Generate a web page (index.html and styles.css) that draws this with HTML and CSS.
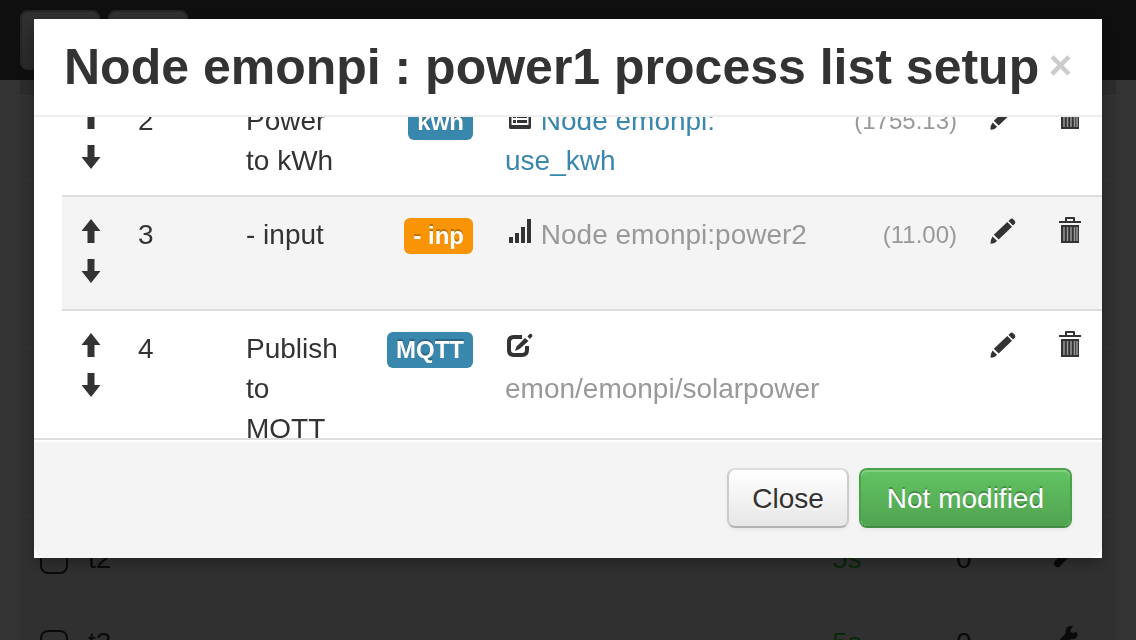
FILE: index.html
```html
<!DOCTYPE html>
<html lang="en">
<head>
<meta charset="utf-8">
<meta name="viewport" content="width=device-width, initial-scale=1">
<title>Process list setup</title>
<link rel="stylesheet" href="styles.css">
</head>
<body>
<svg class="sprite" aria-hidden="true">
  <symbol id="up" viewBox="0 0 28 28"><path d="M13 2l9.500 12h-6v12h-7V14h-6z"/></symbol>
  <symbol id="down" viewBox="0 0 28 28"><path d="M9.500 2h7v12h6L13 26 3.500 14h6z"/></symbol>
  <symbol id="pencil" viewBox="0 0 28 28"><path d="M19.500 4l2-2q1.500-1 3 .5l1 1q1.500 1.500.5 3l-2 2zM18.300 5l4.700 4.700L9.700 22.500 4.800 17.800zM3.500 19.500l4.500 4.200q-2 3-6.500 3-.5-3 2-7.200z"/></symbol>
  <symbol id="trash" viewBox="0 0 28 28"><path d="M8 4V1q0-1 1-1h8q1 0 1 1v3h6v2H2V4zm2 0h6V2h-6zM4 8h18v18H4z"/><path class="slat" d="M7 10v14M10.500 10v14M14 10v14M17.500 10v14M20 10v14"/></symbol>
  <symbol id="signal" viewBox="0 0 28 28"><path d="M4 20h4v6H4zM10 16h4v10h-4zM16 10h4v16h-4zM22 2h4v24h-4z"/></symbol>
  <symbol id="list" viewBox="0 0 28 28"><path fill-rule="evenodd" d="M5 2h20l1 1v22l-1 1H5l-1-1V3zM6.500 5v17h17V5z"/><path d="M8 7h3v3H8zM12 7h10v3H12zM8 12h3v3H8zM12 12h10v3H12zM8 17h3v3H8zM12 17h10v3H12z"/></symbol>
  <symbol id="edit" viewBox="0 0 28 28"><path class="line" d="M17 6H9Q4 6 4 11v8Q4 24 9 24h8Q22 24 22 19v-4"/><path d="M20 7l3.500 3L14.500 18l-4.500 2 1.500-4.500zM22.500 5.500l2-2.500q2.500-1 3 2l-2.500 3z"/></symbol>
  <symbol id="wrench" viewBox="0 0 28 28"><path d="M25 7l-5 1-2-2 3-5q-5-1-7 3-1 2 0 4L2 21q-1 2 1 4t4 1l12-12q4 1 6-2 1-2 0-5z"/></symbol>
</svg>

<div class="page">
  <nav class="navbar" aria-label="Main">
    <button class="nav-button" type="button" aria-label="Menu"></button>
    <button class="nav-button" type="button" aria-label="Setup"></button>
  </nav>
  <table class="inputs">
    <tbody>
      <tr class="group"><td colspan="5"></td></tr>
      <tr><td colspan="5"></td></tr>
      <tr><td colspan="5"></td></tr>
      <tr><td colspan="5"></td></tr>
      <tr><td colspan="5"></td></tr>
      <tr><td colspan="5"></td></tr>
      <tr>
        <td class="tick"><input type="checkbox" aria-label="Select t2"></td><td>t2</td><td class="age">5s</td><td class="count">0</td>
        <td class="tool"><svg class="icon"><use href="#wrench"/></svg></td>
      </tr>
      <tr>
        <td class="tick"><input type="checkbox" aria-label="Select t3"></td><td>t3</td><td class="age">5s</td><td class="count">0</td>
        <td class="tool"><svg class="icon"><use href="#wrench"/></svg></td>
      </tr>
    </tbody>
  </table>
</div>

<div class="backdrop"></div>

<div class="modal" role="dialog" aria-labelledby="modal-title">
  <header class="modal-header">
    <h3 id="modal-title">Node emonpi : power1 process list setup</h3>
    <button class="dismiss" type="button" aria-label="Dismiss">×</button>
  </header>
  <div class="modal-body">
    <table class="process">
      <colgroup><col class="c-move"><col class="c-order"><col class="c-name"><col class="c-label"><col><col class="c-value"><col class="c-edit"><col class="c-delete"></colgroup>
      <tbody>
        <tr>
          <td><a href="#" aria-label="Move up"><svg class="icon"><use href="#up"/></svg></a><a href="#" aria-label="Move down"><svg class="icon"><use href="#down"/></svg></a></td>
          <td>2</td>
          <td>Power to kWh</td>
          <td class="right"><span class="label info">kwh</span></td>
          <td><a class="link" href="#"><svg class="icon"><use href="#list"/></svg> Node emonpi: use_kwh</a></td>
          <td class="right value">(1755.13)</td>
          <td><a href="#" aria-label="Edit"><svg class="icon"><use href="#pencil"/></svg></a></td>
          <td><a href="#" aria-label="Delete"><svg class="icon"><use href="#trash"/></svg></a></td>
        </tr>
        <tr>
          <td><a href="#" aria-label="Move up"><svg class="icon"><use href="#up"/></svg></a><a href="#" aria-label="Move down"><svg class="icon"><use href="#down"/></svg></a></td>
          <td>3</td>
          <td>- input</td>
          <td class="right"><span class="label warning">- inp</span></td>
          <td class="muted"><svg class="icon"><use href="#signal"/></svg> Node emonpi:power2</td>
          <td class="right value">(11.00)</td>
          <td><a href="#" aria-label="Edit"><svg class="icon"><use href="#pencil"/></svg></a></td>
          <td><a href="#" aria-label="Delete"><svg class="icon"><use href="#trash"/></svg></a></td>
        </tr>
        <tr>
          <td><a href="#" aria-label="Move up"><svg class="icon"><use href="#up"/></svg></a><a href="#" aria-label="Move down"><svg class="icon"><use href="#down"/></svg></a></td>
          <td>4</td>
          <td>Publish to MQTT</td>
          <td class="right"><span class="label info">MQTT</span></td>
          <td class="muted"><svg class="icon"><use href="#edit"/></svg> emon/emonpi/solarpower</td>
          <td></td>
          <td><a href="#" aria-label="Edit"><svg class="icon"><use href="#pencil"/></svg></a></td>
          <td><a href="#" aria-label="Delete"><svg class="icon"><use href="#trash"/></svg></a></td>
        </tr>
      </tbody>
    </table>
  </div>
  <footer class="modal-footer">
    <button class="btn" type="button">Close</button>
    <button class="btn success" type="button">Not modified</button>
  </footer>
</div>
<script src="script.js"></script>
</body>
</html>
```
FILE: styles.css
```css
* { box-sizing: border-box; }
body {
  margin: 0;
  height: 100vh;
  overflow: hidden;
  background: #fff;
  color: #333;
  font: 28px/40px "Liberation Sans", Arial, sans-serif;
}
.sprite { display: none; }
.icon { width: 28px; height: 28px; fill: #333; vertical-align: -1px; }
.slat { stroke: #999; stroke-width: 1.5; fill: none; }
.line { stroke: #333; stroke-width: 4; fill: none; }

.page { height: 100vh; overflow: hidden; }
.navbar { display: flex; gap: 8px; height: 80px; padding: 10px 20px; background: #4b4b4b; }
.nav-button { width: 80px; height: 60px; border: 2px solid #bbb; border-radius: 8px; background: linear-gradient(#f2f2f2, #c8c8c8); }
.inputs { width: calc(100% - 40px); margin: 0 20px; border-spacing: 0; background: #f0f0f0; }
.inputs tr { height: 84px; }
.inputs td { border-top: 2px solid #fafafa; padding: 22px 0 20px; line-height: 40px; }
.inputs .group { height: 15px; }
.inputs .group td { height: 15px; padding: 0; border: 0; background: #d8d8d8; }
.inputs .tick { width: 68px; padding-left: 20px; }
.inputs input { display: block; appearance: none; width: 28px; height: 28px; margin: 2px 0 0; border: 2px solid #333; border-radius: 8px; }
.inputs .age { width: 124px; color: #32c832; }
.inputs .count { width: 96px; }
.inputs .tool { width: 64px; }

.backdrop { position: fixed; inset: 0; background: rgba(0, 0, 0, .8); }

.modal {
  position: fixed;
  inset: 19px 34px 82px;
  display: flex;
  flex-direction: column;
  background: #fff;
  box-shadow: 0 6px 14px rgba(0, 0, 0, .3);
}
.modal-header { display: flex; justify-content: space-between; padding: 18px 30px; border-bottom: 2px solid #eee; }
.modal-header h3 { margin: 0; font-size: 50px; line-height: 60px; white-space: nowrap; }
.dismiss { padding: 0; border: 0; background: none; color: #ccc; font: bold 40px/56px "Liberation Sans", Arial, sans-serif; height: 56px; }
.modal-body { flex: 1; min-height: 0; padding-left: 28px; overflow: hidden auto; scrollbar-width: none; }

.process { width: 100%; table-layout: fixed; border-spacing: 0; }
.process td { padding: 18px 16px 14px; border-top: 2px solid #ddd; vertical-align: top; }
.process tr:nth-child(even) { background: #f4f4f4; }
.process td > a { display: block; height: 40px; }
.c-move { width: 60px; }
.c-order { width: 108px; }
.c-name { width: 141px; }
.c-label { width: 118px; }
.c-value { width: 131px; }
.c-edit { width: 68px; }
.c-delete { width: 61px; }
.right { text-align: right; }
.muted, .value { color: #999; }
.process .value { padding-left: 0; font-size: 24px; }
.link { color: #3a87ad; text-decoration: none; }
.label {
  display: inline-block;
  padding: 4px 9px;
  border-radius: 6px;
  color: #fff;
  font-size: 24px;
  font-weight: bold;
  line-height: 28px;
  text-shadow: 0 -2px 0 rgba(0, 0, 0, .25);
}
.info { background: #3a87ad; }
.warning { background: #f89406; }

.modal-footer {
  display: flex;
  justify-content: flex-end;
  gap: 10px;
  padding: 28px 30px 30px;
  border-top: 2px solid #ddd;
  border-radius: 0 0 12px 12px;
  background: #f4f4f4;
  box-shadow: inset 0 2px 0 #fff;
}
.btn {
  padding: 9px 23px 7px;
  border: 2px solid #ccc;
  border-color: #ddd #ccc #b3b3b3;
  border-radius: 8px;
  background: linear-gradient(#fff, #e6e6e6) padding-box;
  box-shadow: inset 0 2px 0 rgba(255, 255, 255, .2), 0 2px 4px rgba(0, 0, 0, .05);
  color: #333;
  font: 28px/40px "Liberation Sans", Arial, sans-serif;
  text-shadow: 0 2px 2px rgba(255, 255, 255, .75);
}
.success {
  padding-right: 26px;
  padding-left: 26px;
  border-color: #4ba14b #4ba14b #438e43;
  background: linear-gradient(#62c462, #51a351) padding-box;
  color: #fff;
  text-shadow: 0 -2px 0 rgba(0, 0, 0, .25);
}
```
FILE: script.js
```js
document.querySelector('.modal-body').scrollTop = 36;
```
